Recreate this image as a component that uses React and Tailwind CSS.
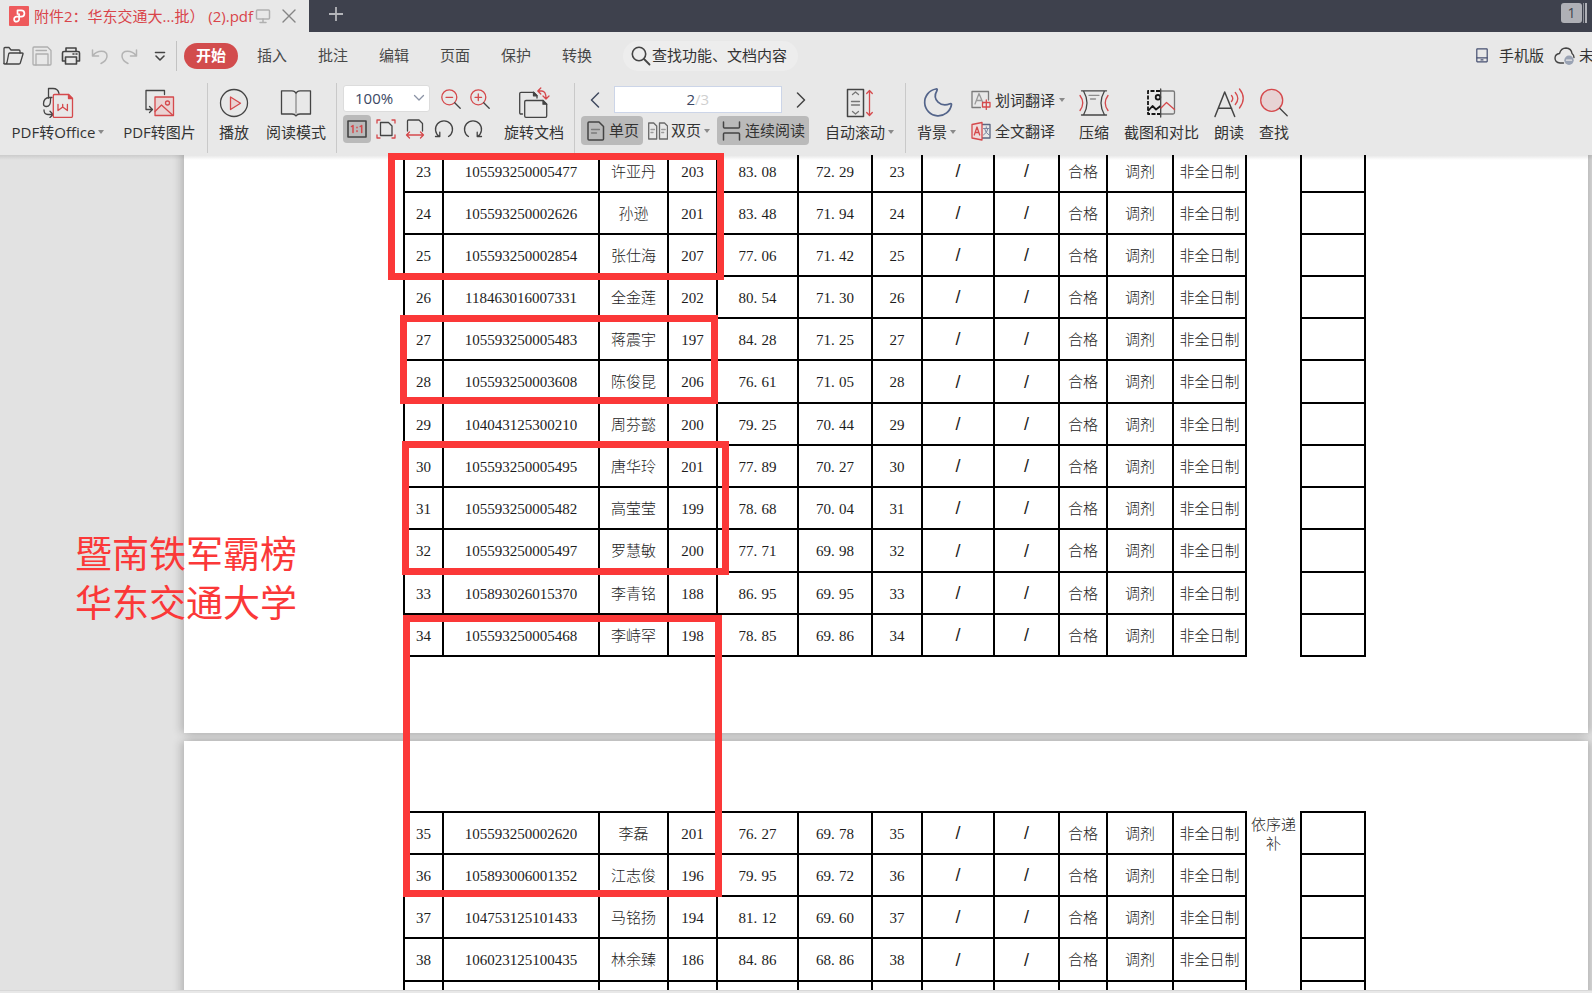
import React from "react";

const INK = "#444444";
const RED = "#d5494c";

function Icon({ size = 32, w, h, children }) {
  const W = w || size;
  const H = h || size;
  return (
    <svg
      width={W}
      height={H}
      viewBox={`0 0 ${W} ${H}`}
      fill="none"
      stroke={INK}
      strokeWidth="1.3"
      strokeLinecap="round"
      strokeLinejoin="round"
      className="shrink-0"
      aria-hidden="true"
    >
      {children}
    </svg>
  );
}

function Caret() {
  return (
    <svg width="6" height="4" viewBox="0 0 6 4" className="shrink-0" aria-hidden="true">
      <path d="M0 0h6L3 4z" fill="#8a8a8a" />
    </svg>
  );
}

function BigButton({ width, label, caret, children }) {
  return (
    <button type="button" className={`flex flex-col items-center gap-1 whitespace-nowrap pt-[7px] ${width}`}>
      <Icon>{children}</Icon>
      <span className="flex h-5 items-center gap-[3px] leading-5">
        {label}
        {caret && <Caret />}
      </span>
    </button>
  );
}

function Separator() {
  return <div className="mt-1 h-[70px] w-px shrink-0 bg-[#c9c9c9]" />;
}

function TitleBar() {
  return (
    <header className="flex h-8 shrink-0 items-stretch bg-[#3e414d]">
      <div className="flex w-[309px] shrink-0 items-center bg-[#e8e8e8] pl-[9px]">
        <svg width="20" height="20" viewBox="0 0 20 20" fill="none" aria-hidden="true">
          <rect width="20" height="20" rx="1" fill="#ee5a5c" />
          <path
            d="M8.500 8V4.300h3.700a3.200 3.200 0 0 1 0 6.400H7.600a2.500 2.500 0 1 0 2.500 2.500V8"
            stroke="#fff"
            strokeWidth="1.700"
            strokeLinecap="round"
            strokeLinejoin="round"
          />
        </svg>
        <span className="ml-[5px] w-[221px] whitespace-nowrap text-[15px] leading-5 text-[#d9444a]">
          附件2：华东交通大...批） (2).pdf
        </span>
        <Icon w={16} h={16}>
          <g stroke="#b0b0b0" strokeWidth="1.500">
            <rect x="1.500" y="2" width="13" height="9" rx="1" />
            <path d="M8 11v3M5 14.500h6" />
          </g>
        </Icon>
        <button type="button" aria-label="关闭标签" className="ml-[11px]">
          <Icon w={14} h={14}>
            <path d="M1 1l12 12M13 1L1 13" stroke="#858585" strokeWidth="1.400" />
          </Icon>
        </button>
      </div>
      <button type="button" aria-label="新建标签" className="flex items-center pb-1 pl-[19px]">
        <Icon w={16} h={16}>
          <path d="M8 1v14M1 8h14" stroke="#b4b5ba" strokeWidth="1.800" strokeLinecap="butt" />
        </Icon>
      </button>
      <div className="ml-auto flex items-start gap-px pr-[5px] pt-[3px]">
        <span className="flex h-5 w-[21px] items-center justify-center rounded-[3px] bg-[#afb0b6] text-sm leading-5 text-[#3e414d]">
          1
        </span>
        <span className="h-5 w-px bg-[#8d8f96]" />
        <span className="h-5 w-0.5 bg-[#afb0b6]" />
      </div>
    </header>
  );
}

const MENUS = ["插入", "批注", "编辑", "页面", "保护", "转换"];

function MenuBar() {
  return (
    <nav className="flex h-[47px] shrink-0 items-center pl-[2px]">
      <div className="flex items-center gap-[8px]">
        <button type="button" aria-label="打开">
          <Icon w={22} h={20}>
            <path d="M2 17.500V2.500q0-1 1-1h4l2 2.500h8q1 0 1 1V7" />
            <path d="M2 17.500q0 .5.700.500H17q1 0 1.300-1L21 8q.300-1-.8-1H8q-1 0-1.300.8L5 16.500q-.5 1.500-1.700 1.500" />
          </Icon>
        </button>
        <button type="button" aria-label="保存">
          <Icon w={20} h={20}>
            <g stroke="#aeaeae">
              <path d="M1 2q0-1 1-1h13.500L19 4.500V18q0 1-1 1H2q-1 0-1-1z" />
              <path d="M4 19V8h12v11M4 4.500h10.500" />
            </g>
          </Icon>
        </button>
        <button type="button" aria-label="打印">
          <Icon w={22} h={20}>
            <g strokeWidth="1.600">
              <path d="M6 5.500V2h10v3.500M5 15H2.500V7q0-1.500 1.500-1.500h14q1.500 0 1.500 1.500v8H17" />
              <path d="M5.500 11h11v7h-11z" />
              <path d="M13 8h1M16 8h1" />
            </g>
          </Icon>
        </button>
        <button type="button" aria-label="撤销">
          <Icon w={20} h={20}>
            <path d="M2.500 4v6h6M3 9.500C7 4 17 3.500 17 10q0 4.500-6 7.500" stroke="#b4b4b4" strokeWidth="1.500" />
          </Icon>
        </button>
        <button type="button" aria-label="恢复" className="ml-0.5">
          <Icon w={20} h={20}>
            <path d="M16.500 4v6h-6M16 9.500C12 4 2 3.500 2 10q0 4.500 6 7.500" stroke="#b4b4b4" strokeWidth="1.500" />
          </Icon>
        </button>
        <button type="button" aria-label="更多" className="ml-0.5">
          <Icon w={20} h={20}>
            <path d="M5.500 6.500h9M6 10l4 4 4-4" strokeWidth="1.600" />
          </Icon>
        </button>
      </div>
      <div className="ml-[6px] h-[30px] w-px bg-[#c2c2c2]" />
      <button type="button" className="ml-[7px] h-[26px] w-[54px] rounded-full bg-[#d24c4d] font-bold text-white">
        开始
      </button>
      <div className="ml-[19px] flex gap-[31px] text-[#484848]">
        {MENUS.map((m) => (
          <button type="button" key={m} className="w-[30px] whitespace-nowrap">
            {m}
          </button>
        ))}
      </div>
      <label className="ml-[31px] flex h-[30px] w-[175px] items-center gap-px rounded-full bg-[#ededed] pl-[8px]">
        <Icon w={20} h={20}>
          <circle cx="8" cy="8" r="6.700" strokeWidth="1.600" />
          <path d="M13 13l5.500 5.500" strokeWidth="1.800" />
        </Icon>
        <input
          aria-label="查找"
          placeholder="查找功能、文档内容"
          className="w-[140px] bg-transparent outline-none placeholder:text-[#333]"
        />
      </label>
      <div className="ml-auto flex shrink-0 items-center whitespace-nowrap">
        <button type="button" className="flex items-center gap-[11px]">
          <Icon w={12} h={16}>
            <g stroke="#454f70" strokeWidth="1.200">
              <rect x=".8" y=".8" width="10.400" height="13" rx=".5" />
              <path d="M1 9.800h10M5 11.900h2" />
            </g>
          </Icon>
          手机版
        </button>
        <button type="button" className="ml-[10px] flex w-[38px] items-center gap-[4px] overflow-hidden">
          <Icon w={21} h={18}>
            <path
              d="M9.500 16H6q-5-.5-5-5 .3-4 4.500-4.500Q7 1 12 1q5.500.5 6 5.500 2 1.500 2 4"
              strokeWidth="1.400"
            />
            <circle cx="15" cy="13.200" r="4.700" fill="#9aa3b4" stroke="none" />
            <path d="M12.500 13.200h5" stroke="#e8e8e8" />
          </Icon>
          未
        </button>
      </div>
    </nav>
  );
}

function ZoomGroup() {
  return (
    <div className="flex w-[147px] flex-col gap-[3px] pt-[6px]">
      <div className="flex h-[27px] items-center">
        <div className="relative">
          <select
            aria-label="缩放比例"
            defaultValue="100%"
            className="h-[27px] w-[87px] appearance-none rounded-[3px] border border-[#dcdcdc] bg-white pl-[11px] text-[15px] text-[#3b4763]"
          >
            <option>100%</option>
          </select>
          <span className="pointer-events-none absolute right-[5px] top-[8px]">
            <Icon w={12} h={10}>
              <path d="M1.500 2.500l4.500 4.500 4.500-4.500" stroke="#8b93a5" />
            </Icon>
          </span>
        </div>
        <button type="button" aria-label="缩小" className="ml-[11px]">
          <Icon w={20} h={20}>
            <circle cx="8.300" cy="8.300" r="7.500" stroke={RED} />
            <path d="M5 8.300h6.600" stroke={RED} />
            <path d="M13.700 13.700l5.500 5.500" />
          </Icon>
        </button>
        <button type="button" aria-label="放大" className="ml-[9px]">
          <Icon w={20} h={20}>
            <circle cx="8.300" cy="8.300" r="7.500" stroke={RED} />
            <path d="M5 8.300h6.600M8.300 5v6.600" stroke={RED} />
            <path d="M13.700 13.700l5.500 5.500" />
          </Icon>
        </button>
      </div>
      <div className="flex h-7 items-center gap-[9px]">
        <button
          type="button"
          aria-label="实际大小"
          className="-mr-1 flex h-7 w-7 items-center justify-center rounded-[4px] bg-[#bababa]"
        >
          <Icon w={20} h={18}>
            <rect x="1" y="1" width="18" height="16" strokeWidth="1.600" />
            <path d="M4.500 6.500l1.500-1v7M13.200 6.500l1.500-1v7" stroke={RED} strokeWidth="1.500" />
            <path d="M10 7.200v.6M10 10.800v.6" stroke={RED} strokeWidth="1.500" />
          </Icon>
        </button>
        <button type="button" aria-label="适合页面">
          <Icon w={20} h={20}>
            <path d="M1 4V1h3M16 1h3v3M19 16v3h-3M4 19H1v-3" stroke={RED} />
            <path d="M4.500 3.500h8L16 7v9.500H4.500z" />
          </Icon>
        </button>
        <button type="button" aria-label="适合宽度">
          <Icon w={20} h={20}>
            <path d="M2.500 12V2q0-1 1-1H14l3.500 3.500V12" />
            <path d="M1.500 16h17M4.500 13l-3 3 3 3M15.500 13l3 3-3 3" stroke={RED} />
          </Icon>
        </button>
        <button type="button" aria-label="向左旋转">
          <Icon w={20} h={20}>
            <path d="M5.500 17.500A8.500 8.500 0 1 1 14.500 17.500M1.500 17.500h4.300v-4.300" />
          </Icon>
        </button>
        <button type="button" aria-label="向右旋转">
          <Icon w={20} h={20}>
            <path d="M14.500 17.500A8.500 8.500 0 1 0 5.500 17.500M18.500 17.500h-4.300v-4.300" />
          </Icon>
        </button>
      </div>
    </div>
  );
}

function PageGroup() {
  return (
    <div className="flex w-[228px] flex-col gap-[3px] whitespace-nowrap pt-[7px]">
      <div className="flex h-[27px] items-center">
        <button type="button" aria-label="上一页" className="flex w-[33px] pl-[9px]">
          <Icon w={10} h={16}>
            <path d="M8.500 1L1.500 8l7 7" stroke="#404a60" strokeWidth="1.500" />
          </Icon>
        </button>
        <label className="flex h-[27px] w-[168px] items-center border border-[#ccd5e8] bg-white">
          <input
            aria-label="页码"
            defaultValue="2"
            className="w-[80px] bg-transparent text-right text-[15px] text-[#3b4763] outline-none"
          />
          <span className="text-[#cfcfcf]">/3</span>
        </label>
        <button type="button" aria-label="下一页" className="flex pl-[14px]">
          <Icon w={10} h={16}>
            <path d="M1.500 1l7 7-7 7" strokeWidth="1.500" />
          </Icon>
        </button>
      </div>
      <div className="flex h-[29px] items-stretch gap-[5px]">
        <button type="button" className="flex w-[62px] items-center gap-[4px] rounded-[4px] bg-[#bababa] pl-[6px]">
          <Icon w={18} h={20}>
            <path d="M1 2q0-1 1-1h10l4.500 4.500V18q0 1-1 1H2q-1 0-1-1z" strokeWidth="1.500" />
            <path d="M4.500 8.500h8M4.500 12h5" stroke="#7b7b7b" />
          </Icon>
          单页
        </button>
        <button type="button" className="flex w-[64px] items-center gap-[3px]">
          <Icon w={20} h={18}>
            <path d="M.7 1h5l3 3v13h-8zM11.500 1h5l3 3v13h-8z" stroke="#6a6a6a" />
            <path d="M3 7.500h3.500M3 10.500h2M13.700 7.500h3.500M13.700 10.500h2" stroke="#9a9a9a" />
          </Icon>
          双页
          <Caret />
        </button>
        <button type="button" className="flex w-[92px] items-center gap-[4px] rounded-[4px] bg-[#bababa] pl-[5px]">
          <Icon w={19} h={20}>
            <path d="M1.500 1v5q0 1 1 1h14q1 0 1-1V1M1.500 19v-6q0-1 1-1h14q1 0 1 1v6" strokeWidth="1.500" />
          </Icon>
          连续阅读
        </button>
      </div>
    </div>
  );
}

function Ribbon() {
  return (
    <div className="flex h-[76px] shrink-0 items-start text-[15px]">
      <div className="flex gap-[18px] pl-[11px] pr-[11px]">
        <BigButton width="w-[94px]" label="PDF转Office" caret>
          <path d="M6.500 12V2.500H11q5 0 6 5" />
          <path d="M10 11.500H7.500q-6 .3-6 6.500 0 2.500 3 2.500 4 0 4-6V11.500" />
          <path d="M2 24q0 4.500 4 4.500h5M8 25.300l3.200 3.200L8 31.500" />
          <path d="M12.500 8.500h14l4 4v17.500q0 1.500-1.500 1.500H12.500q-1.200 0-1.200-1.200V9.700q0-1.200 1.200-1.200z" stroke={RED} />
          <path d="M26.500 8.500v4h4z" fill={RED} stroke={RED} />
          <path d="M16 18.300v6.200l4.700-3.500 4.700 3.500v-6.200M20.700 18.500V21" stroke={RED} />
        </BigButton>
        <BigButton width="w-[73px]" label="PDF转图片">
          <path d="M20.500 8.500V4.500H2V23.500H8M5.500 20.500l3 3-3 3" />
          <rect x="11" y="11" width="18.500" height="18.500" fill="#ead3d3" stroke={RED} />
          <circle cx="23.500" cy="17" r="2" stroke={RED} />
          <path d="M11 25.500l6.500-6.500 11 10" stroke={RED} />
        </BigButton>
      </div>
      <Separator />
      <div className="flex gap-[17px] pl-[11px] pr-[10px]">
        <BigButton width="w-[30px]" label="播放">
          <circle cx="16" cy="17" r="13.500" />
          <path d="M12.500 11v12.500L22.500 17.200z" stroke={RED} fill="#ead3d3" />
        </BigButton>
        <BigButton width="w-[60px]" label="阅读模式">
          <path d="M16 7.500Q15 4.800 12 4.800H1.500V28H12q3 0 4 2 1-2 4-2h10.500V4.800H20Q17 4.800 16 7.500z" />
          <path d="M16 8v19" stroke="#8a8a8a" />
        </BigButton>
      </div>
      <Separator />
      <div className="flex gap-[14px] pl-[6px] pr-[10px]">
        <ZoomGroup />
        <BigButton width="w-[60px]" label="旋转文档">
          <path d="M4.500 28H3q-1.300 0-1.300-1.300V7.500Q1.700 6.300 3 6.300h12.500L19 9.800V12" />
          <path d="M15.500 6.300v3.500H19z" fill={INK} />
          <path d="M8 14.500h17l3.700 3.700V30q0 1.300-1.300 1.300H8q-1.300 0-1.300-1.300V15.800q0-1.300 1.300-1.300z" />
          <path d="M25 14.500v3.700h3.700z" fill={INK} />
          <path d="M20.500 5H24q4 .3 4 7.500M22.800 2l-3 3 3 3M25 10l3 3 3-3" stroke={RED} />
        </BigButton>
      </div>
      <Separator />
      <div className="flex gap-[16px] pl-[6px] pr-[11px]">
        <PageGroup />
        <BigButton width="w-[69px]" label="自动滚动" caret>
          <rect x="3.500" y="3.500" width="16" height="27" strokeWidth="1.500" />
          <path d="M8.500 8.500l3-2.500 3 2.500M8.500 25.500l3 2.500 3-2.500" stroke="#777" />
          <path d="M7.500 15.500h8M7.500 19h8" stroke="#777" />
          <path d="M25.500 5v24M22.700 7.500l2.800-3 2.800 3M22.700 26.500l2.800 3 2.800-3" stroke={RED} />
        </BigButton>
      </div>
      <Separator />
      <div className="flex gap-[15px] pl-[11px]">
        <BigButton width="w-[39px]" label="背景" caret>
          <path
            d="M15 3A13.500 13.500 0 1 0 30.500 18.500q0-1.200-1.500-.8C20 21.500 10.500 14 16 4.500q.8-1.800-1-1.500z"
            stroke="#53648a"
            strokeWidth="1.700"
          />
        </BigButton>
        <div className="flex w-[93px] flex-col gap-[11px] whitespace-nowrap pt-[11px]">
          <button type="button" className="flex h-5 items-center gap-[4px] leading-5">
            <Icon w={20} h={20}>
              <path d="M9.500 17.500H1V1.500h16.500V10" stroke="#7b7b7b" />
              <path d="M4 14L8 3.500 12 13M5.300 10.500h5" stroke="#9a9a9a" />
              <path d="M11.500 12.500h7.500v4.500h-7.500zM15.300 10v9.500" stroke={RED} />
            </Icon>
            划词翻译
            <Caret />
          </button>
          <button type="button" className="flex h-5 items-center gap-[4px] leading-5">
            <Icon w={20} h={20}>
              <path d="M11 3.500h8v13.500h-8" stroke="#5b6580" />
              <path d="M12.500 7.500h5.500M15.300 5.800v1.700M17 7.500q-.8 4.500-4.500 6.500M13.500 7.500q.8 4.500 4.500 6.500" stroke="#7c86a0" strokeWidth="1" />
              <path d="M1 3.500l10-2v17.500l-10-2z" fill="#f0dcdc" stroke={RED} />
              <path d="M3.300 14L6 6l2.700 8M4.200 11.500h3.600" stroke={RED} />
            </Icon>
            全文翻译
          </button>
        </div>
        <BigButton width="w-[30px]" label="压缩">
          <path d="M3.500 4.800h25M3.500 29h25M5.500 5q7 12 0 24M26.500 5q-7 12 0 24" />
          <path d="M11 9.300h10M12.500 13h5" stroke="#8c8c8c" />
          <path d="M2 9.500q5.500 7.500 0 15M30 9.500q-5.500 7.500 0 15" stroke={RED} />
        </BigButton>
        <BigButton width="w-[75px]" label="截图和对比">
          <path d="M15 5h12q1.500 0 1.500 1.500v20q0 1.500-1.500 1.500H15" stroke="#777" />
          <g stroke="#151515" strokeWidth="1.800" strokeLinecap="butt">
            <path d="M14 5H2v23h12" strokeDasharray="4 1.500" />
            <path d="M2 25l4.500-5 3.500 3.500 4.500-3.500" />
            <circle cx="12" cy="11.300" r="2.300" />
          </g>
          <path d="M14.700 3v28" />
          <path d="M15 22l5.500-5.500 8 7" stroke={RED} />
        </BigButton>
        <BigButton width="w-[30px]" label="朗读">
          <path d="M2 30.500L11.700 6l10 24.500M5.700 22.300h13" strokeWidth="1.500" />
          <path d="M18.500 9.500q2.500 3 0 6M22.300 6.500q5 6 0 12M26.500 3q7.500 9 0 19" stroke={RED} />
        </BigButton>
        <BigButton width="w-[30px]" label="查找">
          <circle cx="13.700" cy="14.300" r="11" fill="#e7d3d4" stroke={RED} />
          <path d="M21.700 22.300l7.500 7.500" />
        </BigButton>
      </div>
    </div>
  );
}

const PAGE_ONE = [
  [23, "105593250005477", "许亚丹", 203, "83.08", "72.29"],
  [24, "105593250002626", "孙逊", 201, "83.48", "71.94"],
  [25, "105593250002854", "张仕海", 207, "77.06", "71.42"],
  [26, "118463016007331", "全金莲", 202, "80.54", "71.30"],
  [27, "105593250005483", "蒋震宇", 197, "84.28", "71.25"],
  [28, "105593250003608", "陈俊昆", 206, "76.61", "71.05"],
  [29, "104043125300210", "周芬懿", 200, "79.25", "70.44"],
  [30, "105593250005495", "唐华玲", 201, "77.89", "70.27"],
  [31, "105593250005482", "高莹莹", 199, "78.68", "70.04"],
  [32, "105593250005497", "罗慧敏", 200, "77.71", "69.98"],
  [33, "105893026015370", "李青铭", 188, "86.95", "69.95"],
  [34, "105593250005468", "李峙罕", 198, "78.85", "69.86"],
];

const PAGE_TWO = [
  [35, "105593250002620", "李磊", 201, "76.27", "69.78"],
  [36, "105893006001352", "江志俊", 196, "79.95", "69.72"],
  [37, "104753125101433", "马铭扬", 194, "81.12", "69.60"],
  [38, "106023125100435", "林余臻", 186, "84.86", "68.86"],
  null,
];

const TALL_ROWS = [28, 32, 38];

function Score({ value }) {
  const [whole, part] = value.split(".");
  return (
    <>
      {whole}
      <span className="inline-block w-2 text-left">.</span>
      {part}
    </>
  );
}

function Slash() {
  return <span className="font-['Liberation_Sans',sans-serif] text-lg leading-[19px]">/</span>;
}

function ResultTable({ rows, note, top }) {
  return (
    <table className="w-[963px] table-fixed border-separate border-spacing-0 text-center font-['Liberation_Serif','Noto_Sans_CJK_SC',serif] text-[15px] font-light leading-[19px] text-[#1c1c1c]">
      <colgroup>
        <col className="w-[41px]" />
        <col className="w-[156px]" />
        <col className="w-[69px]" />
        <col className="w-[49px]" />
        <col className="w-[81px]" />
        <col className="w-[74px]" />
        <col className="w-[50px]" />
        <col className="w-[72px]" />
        <col className="w-[65px]" />
        <col className="w-[48px]" />
        <col className="w-[66px]" />
        <col className="w-[73px]" />
        <col className="w-[55px]" />
        <col className="w-[64px]" />
      </colgroup>
      <tbody>
        {rows.map((row, i) => {
          const edge = top && i === 0 ? "border-t-2" : "";
          const cell = `border-b-2 border-r-2 border-black p-0 pt-0.5 whitespace-nowrap ${edge}`;
          const height = edge ? "h-[44px]" : row && TALL_ROWS.includes(row[0]) ? "h-[43px]" : "h-[42px]";
          const [no, id, name, initial, retest, total] = row || [];
          return (
            <tr key={i} className={height}>
              <td className={`border-l-2 ${cell}`}>{no}</td>
              <td className={cell}>{id}</td>
              <td className={cell}>{name}</td>
              <td className={cell}>{initial}</td>
              <td className={cell}>{row && <Score value={retest} />}</td>
              <td className={cell}>{row && <Score value={total} />}</td>
              <td className={cell}>{no}</td>
              <td className={cell}>{row && <Slash />}</td>
              <td className={cell}>{row && <Slash />}</td>
              <td className={cell}>{row && "合格"}</td>
              <td className={cell}>{row && "调剂"}</td>
              <td className={cell}>{row && "非全日制"}</td>
              {i === 0 && (
                <td rowSpan={rows.length} className="border-r-2 border-black px-[3px] py-[5px] align-top">
                  {note}
                </td>
              )}
              <td className={cell} />
            </tr>
          );
        })}
      </tbody>
    </table>
  );
}

function Viewer() {
  const sheet =
    "bg-white pb-[76px] pl-[219px] shadow-[-4px_0_8px_rgba(0,0,0,0.16),4px_0_8px_rgba(0,0,0,0.16)]";
  return (
    <main className="relative min-h-0 flex-1 overflow-hidden bg-[#e2e2e2]">
      <div className="flex flex-col gap-2 pl-[184px] pr-1">
        <section className={`-mt-1 ${sheet}`}>
          <ResultTable rows={PAGE_ONE} />
        </section>
        <section className={`pt-[70px] ${sheet}`}>
          <ResultTable rows={PAGE_TWO} note="依序递补" top />
        </section>
      </div>
      <div className="absolute inset-x-0 top-0 h-[5px] bg-gradient-to-b from-black/10 to-transparent" />
    </main>
  );
}

function Annotations() {
  const box = "absolute border-[7px] border-[#fb3838]";
  return (
    <div className="pointer-events-none">
      <div className={`${box} left-[388px] top-[153px] h-[127px] w-[336px]`} />
      <div className={`${box} left-[400px] top-[315px] h-[89px] w-[318px]`} />
      <div className={`${box} left-[402px] top-[441px] h-[134px] w-[327px]`} />
      <div className={`${box} left-[403px] top-[615px] h-[282px] w-[319px]`} />
      <p className="absolute left-[75px] top-[529px] whitespace-nowrap text-[37px] leading-[49px] text-[#fb3838]">
        暨南铁军霸榜
        <br />
        华东交通大学
      </p>
    </div>
  );
}

export default function App() {
  return (
    <div className="relative flex h-screen flex-col overflow-hidden bg-[#e8e8e8] font-['Open_Sans','Noto_Sans_CJK_SC',sans-serif] text-[15px] text-[#333]">
      <TitleBar />
      <MenuBar />
      <Ribbon />
      <Viewer />
      <div className="h-[3px] shrink-0 border-t border-[#d8d8d8] bg-[#e8e8e8]" />
      <Annotations />
    </div>
  );
}
